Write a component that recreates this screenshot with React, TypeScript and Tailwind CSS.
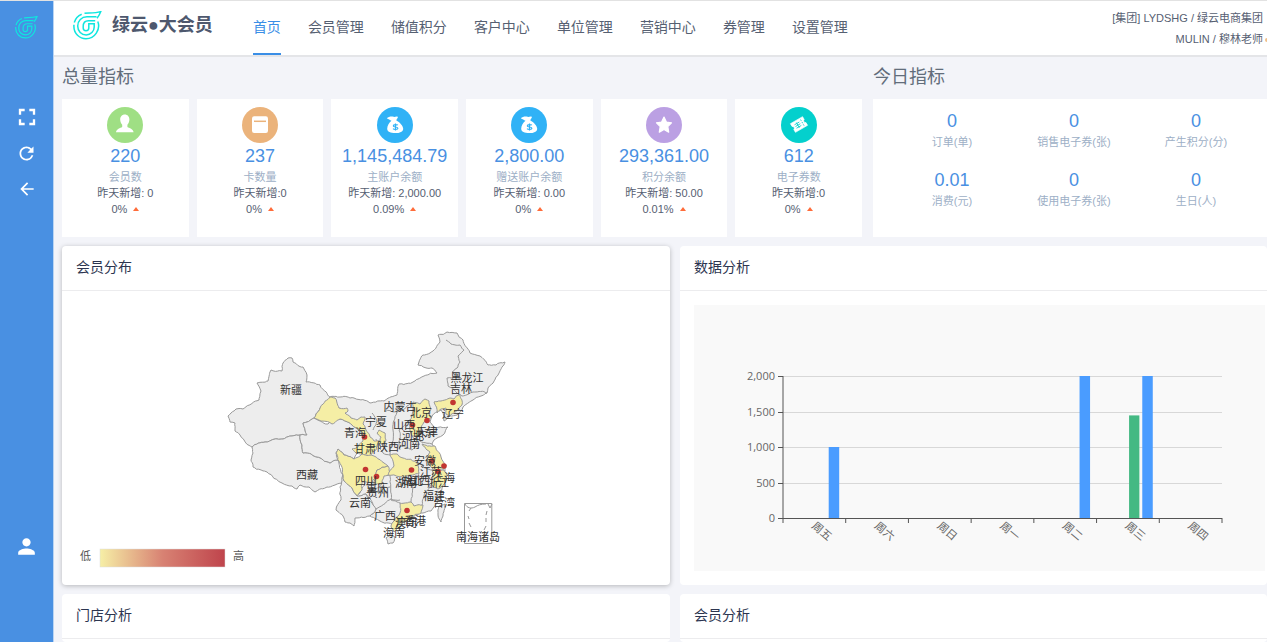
import type { ReactNode } from "react";
import {
  MdArrowBack,
  MdFullscreen,
  MdPerson,
  MdRefresh,
} from "react-icons/md";

type Point = [number, number];

const navItems = [
  "首页",
  "会员管理",
  "储值积分",
  "客户中心",
  "单位管理",
  "营销中心",
  "券管理",
  "设置管理",
];

const MemberIcon = () => (
  <svg viewBox="0 0 36 36" className="size-9">
    <circle cx="18" cy="18" r="18" fill="#9fdf84" />
    <path
      d="M17.8 7.6c2.8 0 4.6 2.2 4.6 5 0 2.200-.9 4.100-2 5.200v2.200c1.800 1.200 6 2 6.200 5.300H9c.2-3.300 4.400-4.100 6.200-5.300v-2.200c-1.100-1.100-2-3-2-5.200 0-2.800 1.800-5 4.600-5z"
      fill="#fff"
    />
  </svg>
);

const CardIcon = () => (
  <svg viewBox="0 0 36 36" className="size-9">
    <circle cx="18" cy="18" r="18" fill="#ebb37b" />
    <rect x="10" y="9.300" width="16" height="16.700" rx="2.200" fill="#fff" />
    <path d="M12 14.300h12" stroke="#ebb37b" strokeWidth="1.500" />
  </svg>
);

const MoneyIcon = () => (
  <svg viewBox="0 0 36 36" className="size-9">
    <circle cx="18" cy="18" r="18" fill="#30b2f6" />
    <path
      d="M9.800 11.300c1.700-1.500 4.400-2.200 6.700-1.500 1.400.4 2.800-.9 4.200-.1.800.6-1.400 2.600-1.300 3.700 3.200 1.500 6.800 5.500 6.800 8.300 0 3-3.400 4.400-8 4.400s-8-1.500-8-4.400c0-2.900 2-6.200 4.300-7.900-1.500-.9-3-1.400-4.700-2.500z"
      fill="#fff"
    />
    <path
      d="M20.800 18.200c-.7-.8-4.500-1-4.500.7 0 1.500 4.600.7 4.600 2.300 0 1.700-4 1.500-4.900.5M18.500 16.500v7"
      fill="none"
      stroke="#30b2f6"
      strokeWidth="1.200"
    />
  </svg>
);

const StarIcon = () => (
  <svg viewBox="0 0 36 36" className="size-9">
    <circle cx="18" cy="18" r="18" fill="#bba0e3" />
    <path
      d="M18 10l2.400 5.100 5.100.7-3.700 3.800.9 5.600-4.700-2.700-4.700 2.700.9-5.600-3.700-3.800 5.100-.7z"
      fill="#fff"
      stroke="#fff"
      strokeWidth="1.200"
      strokeLinejoin="round"
    />
  </svg>
);

const TicketIcon = () => (
  <svg viewBox="0 0 36 36" className="size-9">
    <circle cx="18" cy="18" r="18" fill="#04d0cd" />
    <g transform="rotate(-30 18 17.500)">
      <path
        d="M11 12.500h14v3.200a1.900 1.900 0 0 0 0 3.600v3.200H11v-3.200a1.900 1.900 0 0 0 0-3.600z"
        fill="#fff"
        stroke="#fff"
        strokeWidth=".6"
      />
      <path
        d="M14 15.500h5.500M14 17.500h5.500M14 19.500h5.500M16.700 14.500v6M21.800 14v1.500M21.800 16.700v1.600M21.800 19.500V21"
        stroke="#04d0cd"
        strokeWidth=".8"
      />
    </g>
  </svg>
);

const totals: {
  icon: ReactNode;
  value: string;
  label: string;
  added: string;
  rate: string;
}[] = [
  { icon: <MemberIcon />, value: "220", label: "会员数", added: "昨天新增: 0", rate: "0%" },
  { icon: <CardIcon />, value: "237", label: "卡数量", added: "昨天新增:0", rate: "0%" },
  { icon: <MoneyIcon />, value: "1,145,484.79", label: "主账户余额", added: "昨天新增: 2,000.00", rate: "0.09%" },
  { icon: <MoneyIcon />, value: "2,800.00", label: "赠送账户余额", added: "昨天新增: 0.00", rate: "0%" },
  { icon: <StarIcon />, value: "293,361.00", label: "积分余额", added: "昨天新增: 50.00", rate: "0.01%" },
  { icon: <TicketIcon />, value: "612", label: "电子券数", added: "昨天新增:0", rate: "0%" },
];

const today = [
  { value: "0", label: "订单(单)" },
  { value: "0", label: "销售电子券(张)" },
  { value: "0", label: "产生积分(分)" },
  { value: "0.01", label: "消费(元)" },
  { value: "0", label: "使用电子券(张)" },
  { value: "0", label: "生日(人)" },
];

const Logo = ({ className }: { className: string }) => (
  <svg
    viewBox="0 0 29 29"
    className={className}
    fill="none"
    stroke="#0fe6df"
    strokeWidth="1.500"
  >
    <path d="M11.500 2.300c5-.4 11 .1 16.300-1.700-1 2.700-2.400 5-3.800 6.700M24.800 10.500c3 8-3 17.200-11.800 17.200C6.500 27.700.9 22.500.9 15.500v-1.700M1.300 11.500c1-3.800 3.700-6.800 7.400-8.300" />
    <path d="M23.500 5.800H14C8.500 5.800 4.700 9.800 4.700 15s3.800 8.900 8.500 8.900c4.500 0 8-3.500 8-8v-3.200h-5.400V17c0 3.600-5.600 3.600-5.600 0v-1.500c0-3.500 2-5.700 5.300-5.700h6.700" />
  </svg>
);

// Splits an edge so that borders look surveyed rather than ruled. The offset
// depends only on the midpoint, so neighbours that share an edge stay closed.
const split = (a: Point, b: Point, depth: number): Point[] => {
  const dx = b[0] - a[0];
  const dy = b[1] - a[1];
  const length = Math.hypot(dx, dy);
  if (depth === 0 || length < 3) return [b];
  const mx = (a[0] + b[0]) / 2;
  const my = (a[1] + b[1]) / 2;
  const noise = Math.sin(mx * 12.9898 + my * 78.233);
  const other = Math.cos(mx * 39.346 + my * 11.135);
  const m: Point = [mx + noise * length * 0.09, my + other * length * 0.09];
  return [...split(a, m, depth - 1), ...split(m, b, depth - 1)];
};

const outline = (text: string, closed = true) => {
  const points = text
    .split(" ")
    .map((pair) => pair.split(",").map(Number) as Point);
  const all: Point[] = [points[0]];
  const end = closed ? points.length : points.length - 1;
  for (let i = 0; i < end; i++) {
    all.push(...split(points[i], points[(i + 1) % points.length], 3));
  }
  return (
    "M" +
    all.map(([x, y]) => `${x.toFixed(1)} ${y.toFixed(1)}`).join("L") +
    (closed ? "Z" : "")
  );
};

const greyRegions = [
  // north, east and south
  "330,397 340,397 354,398 370,403 384,401 397,395 399,384 413,382 424,376 437,373 432,368 418,365 423,355 430,353 440,342 438,335 447,332 457,333 463,340 470,353 480,356 488,365 496,365 505,362 498,375 488,388 487,393 481,396 473,400 463,407 457,415 450,416 444,421 441,410 432,416 430,422 435,428 448,427 443,435 434,440 432,444 440,457 446,465 445,473 445,482 441,493 437,503 431,511 423,513 410,519 402,523 394,532 392,524 380,521 370,516 376,509 366,494 357,496 362,488 368,478 380,478 372,458 366,443 352,424 339,408",
  // Xinjiang
  "330,397 320,385 306,382 307,375 303,367 293,362 292,358 288,358 283,363 282,371 271,370 268,381 257,383 261,391 259,400 243,409 236,409 228,416 230,422 235,423 235,431 240,435 244,440 252,447 265,442 283,439 292,436 300,435 307,435 305,430 303,423 314,418 320,408 330,400",
  // Tibet
  "252,447 253,453 251,460 253,467 267,472 282,483 292,486 297,489 300,485 309,487 315,492 327,487 335,485 342,483 343,475 338,460 330,463 317,457 303,453 302,445 300,435 292,436 283,439 265,442",
  // Qinghai
  "300,435 307,435 305,430 303,423 314,418 328,424 340,419 352,425 361,431 366,443 358,452 354,459 344,455 338,449 336,453 338,460 330,463 317,457 303,453 302,445",
  // Yunnan
  "343,475 344,481 352,488 357,496 366,494 372,503 376,509 370,516 355,518 354,526 350,523 345,522 343,516 336,510 341,500 340,487",
  // Hainan
  "386,538 391,535 395,537 393,543 388,544",
  // Taiwan
  "439,506 445,504 443,516 441,522 438,515",
];

const yellowRegions = [
  // Gansu
  "330,397 335,398 339,408 347,408 348,411 345,413 351,418 357,420 361,417 365,417 363,424 366,430 370,437 374,441 380,441 381,437 377,433 379,430 385,433 386,440 384,444 378,443 376,450 370,456 362,454 356,453 352,449 358,447 363,441 361,431 352,425 340,419 332,424 314,418 320,408",
  // Sichuan
  "338,449 344,455 354,459 362,454 374,456 384,463 388,466 377,470 372,483 362,482 362,490 357,496 352,488 344,481 343,475 341,465 336,453",
  // Chongqing
  "377,470 388,466 391,475 384,476 381,485 374,484",
  // Hubei
  "390,455 397,454 403,458 417,463 419,473 407,476 388,475 394,466",
  // Hebei
  "413,402 420,404 425,399 429,401 431,409 428,413 432,417 424,422 420,435 412,436 410,420",
  // Liaoning
  "434,402 441,401 450,398 454,399 460,394 462,405 450,416 446,414 446,408 441,409 437,413",
  // Jiangsu
  "422,444 435,446 441,457 446,465 444,469 433,469 427,460 430,452",
  // Zhejiang
  "432,470 444,470 447,475 445,483 438,489 431,484",
  // Guangdong
  "400,503 411,502 414,506 423,505 421,513 410,518 402,523 398,528 394,532 391,527 394,521 400,513",
];

const innerBorders = [
  "446,340 451,344 460,345 464,350 458,356 460,362 452,372 462,379 447,378 448,386 462,396 473,392 487,393",
  "397,412 393,430 390,455",
  "384,411 397,412 410,404",
  "410,420 399,430 400,450",
  "412,436 420,441 432,444",
  "400,446 412,450 420,444",
  "417,463 428,469 433,470",
  "419,473 412,485 411,502",
  "390,476 391,500 400,503",
  "368,490 380,486 390,487",
  "376,509 391,499 400,500",
  "432,484 425,492 422,505",
  "376,439 383,453 390,455",
  "372,413 377,421 373,430",
];

const provinces: [string, number, number][] = [
  ["新疆", 291, 394],
  ["西藏", 307, 479],
  ["黑龙江", 467, 382],
  ["吉林", 461, 393],
  ["辽宁", 453, 418],
  ["内蒙古", 400, 411],
  ["北京", 421, 417],
  ["天津", 427, 436],
  ["河北", 413, 440],
  ["山东", 424, 437],
  ["山西", 404, 429],
  ["宁夏", 376, 426],
  ["青海", 355, 437],
  ["甘肃", 365, 453],
  ["陕西", 388, 451],
  ["河南", 409, 448],
  ["安徽", 425, 465],
  ["江苏", 431, 476],
  ["上海", 444, 482],
  ["浙江", 438, 487],
  ["四川", 366, 485],
  ["重庆", 377, 492],
  ["贵州", 378, 497],
  ["湖北", 412, 485],
  ["湖南", 406, 487],
  ["江西", 419, 485],
  ["福建", 434, 500],
  ["台湾", 444, 507],
  ["云南", 360, 507],
  ["广西", 385, 520],
  ["广东", 407, 526],
  ["香港", 415, 525],
  ["澳门", 406, 527],
  ["海南", 394, 537],
  ["南海诸岛", 478, 541],
];

const stores: Point[] = [
  [453, 402.5],
  [427, 420.5],
  [412.5, 425],
  [364.5, 437],
  [365.5, 469.5],
  [376.5, 476.5],
  [411.5, 470],
  [432, 461],
  [444, 466],
  [438, 471.5],
  [407, 510.5],
];

const ChinaMap = () => (
  <svg viewBox="62 291 608 294" className="block w-full">
    <defs>
      <linearGradient id="heat">
        <stop offset="0" stopColor="#f6efa6" />
        <stop offset="0.5" stopColor="#d88273" />
        <stop offset="1" stopColor="#bf444c" />
      </linearGradient>
    </defs>
    <g stroke="#999" strokeWidth="1" strokeLinejoin="round">
      {greyRegions.map((region) => (
        <path key={region} d={outline(region)} fill="#ededed" />
      ))}
      {innerBorders.map((border) => (
        <path key={border} d={outline(border, false)} fill="none" />
      ))}
      {yellowRegions.map((region) => (
        <path key={region} d={outline(region)} fill="#f5eea5" />
      ))}
      <path d="M464.500 503.500h27.300v40h-27.300z" fill="none" />
      <path
        d="M465 504c2 4 6 5 10 3 3-2 6-3 11-3M488 504l2 4 2-4M471 508l-2 3M468 516l1 3M469 523l2 4M487 511l-1 4M486 518v4M486 526l-2 4M470 534l3-3M481 531l3 4"
        fill="none"
      />
    </g>
    <g className="fill-[#c23531]">
      {stores.map(([x, y]) => (
        <circle key={`${x}-${y}`} cx={x} cy={y} r="2.800" />
      ))}
    </g>
    <g className="fill-[#333] text-[11px]" textAnchor="middle">
      {provinces.map(([name, x, y]) => (
        <text key={name} x={x} y={y}>
          {name}
        </text>
      ))}
    </g>
    <rect x="100" y="549" width="125" height="18" fill="url(#heat)" stroke="#ddd" strokeWidth="0.500" />
    <g className="fill-[#555] text-[11px]">
      <text x="80" y="560">
        低
      </text>
      <text x="233" y="560">
        高
      </text>
    </g>
  </svg>
);

const week = [
  { day: "周五", green: 0, blue: 1000 },
  { day: "周六", green: 0, blue: 0 },
  { day: "周日", green: 0, blue: 0 },
  { day: "周一", green: 0, blue: 0 },
  { day: "周二", green: 0, blue: 2000 },
  { day: "周三", green: 1445, blue: 2000 },
  { day: "周四", green: 0, blue: 0 },
];

const scale = [2000, 1500, 1000, 500, 0];
const plot = { left: 89, right: 528, bottom: 213, height: 142 };
const band = (plot.right - plot.left) / week.length;

const toHeight = (value: number) => (value / 2000) * plot.height;

const WeekChart = () => (
  <svg viewBox="0 0 571 266" className="block w-full bg-[#f9f9f9]">
    {scale.map((value) => {
      const y = Math.round(plot.bottom - toHeight(value)) + 0.5;
      return (
        <g key={value}>
          {value > 0 && (
            <line x1={plot.left} x2={plot.right} y1={y} y2={y} stroke="#d8d8d8" />
          )}
          <line x1={plot.left - 5} x2={plot.left} y1={y} y2={y} stroke="#555" />
          <text
            x={plot.left - 8}
            y={y + 3}
            textAnchor="end"
            className="fill-[#666] font-['Open_Sans','Noto_Sans',sans-serif] text-[11px]"
          >
            {value.toLocaleString("en-US")}
          </text>
        </g>
      );
    })}
    {week.map(({ day, green, blue }, i) => {
      const x = plot.left + band * i;
      return (
        <g key={day}>
          <rect x={x + 32.5} y={plot.bottom - toHeight(green)} width="10.300" height={toHeight(green)} fill="#44b983" />
          <rect x={x + 45.7} y={plot.bottom - toHeight(blue)} width="10.500" height={toHeight(blue)} fill="#4a9cff" />
          <text
            transform={`translate(${x + 28} ${plot.bottom + 9}) rotate(40)`}
            className="fill-[#666] text-[11px]"
          >
            {day}
          </text>
          <line x1={x + band} x2={x + band} y1={plot.bottom} y2={plot.bottom + 5} stroke="#555" />
        </g>
      );
    })}
    <path
      d={`M${plot.left} ${plot.bottom - plot.height}V${plot.bottom + 5}M${plot.left} ${plot.bottom + 0.5}H${plot.right}`}
      fill="none"
      stroke="#555"
    />
  </svg>
);

const Panel = ({
  title,
  raised = false,
  children,
}: {
  title: string;
  raised?: boolean;
  children?: ReactNode;
}) => (
  <section
    className={`rounded bg-white ${raised ? "shadow-[0_1px_5px_rgba(0,0,0,0.25)]" : ""}`}
  >
    <h3 className="flex h-[45px] items-center border-b border-[#ececee] px-3.5 pb-0.5 text-sm text-[#2c3550]">
      {title}
    </h3>
    {children}
  </section>
);

const Sidebar = () => (
  <aside className="flex w-[54px] shrink-0 flex-col items-center border-r border-[#b9d4f3] bg-[#4990e2] text-white">
    <Logo className="mt-[15px] size-[23px]" />
    <div className="mt-16 flex flex-col items-center gap-2">
      <button type="button" aria-label="全屏" className="flex size-7 items-center justify-center">
        <MdFullscreen size={28} />
      </button>
      <button type="button" aria-label="刷新" className="flex size-7 items-center justify-center">
        <MdRefresh size={21} />
      </button>
      <button type="button" aria-label="返回" className="flex size-7 items-center justify-center">
        <MdArrowBack size={20} />
      </button>
    </div>
    <button type="button" aria-label="用户" className="mt-auto mb-[83px]">
      <MdPerson size={25} />
    </button>
  </aside>
);

const Header = () => (
  <header className="flex h-14 items-stretch border-b-2 border-[#e4e5e8] bg-white pl-[19px]">
    <div className="flex items-center gap-2.5 pb-1.5">
      <Logo className="size-[29px]" />
      <h1 className="text-lg font-bold text-[#4e586e]">绿云●大会员</h1>
    </div>
    <nav className="ml-10 flex gap-[27px] text-sm text-[#566072]">
      {navItems.map((item, i) => (
        <a
          key={item}
          href="#"
          className={`flex items-center whitespace-nowrap border-b-2 ${
            i === 0 ? "border-[#3a8ee6] text-[#3a8ee6]" : "border-transparent"
          }`}
        >
          {item}
        </a>
      ))}
    </nav>
    <div className="ml-auto flex flex-col items-end pt-[7px] text-[11px] leading-[21px] whitespace-nowrap text-[#566072]">
      <span className="pr-1">[集团] LYDSHG / 绿云电商集团</span>
      <span className="flex items-center gap-0.5">
        MULIN / 穆林老师
        <span className="h-1 w-0.5 rounded-l-full bg-[#f0c08a]" />
      </span>
    </div>
  </header>
);

export default function App() {
  return (
    <div className="flex min-h-screen flex-col border-t border-[#e2e2e2] bg-white pb-0.5 font-['Liberation_Sans','Noto_Sans_CJK_SC',sans-serif]">
      <div className="flex flex-1">
        <Sidebar />
        <div className="flex min-w-0 flex-1 flex-col bg-[#f3f4f9]">
          <Header />
          <main className="flex flex-1 flex-col gap-[9px] pl-2">
            <div className="grid grid-cols-[800fr_394fr] gap-x-[11px]">
              <section>
                <h2 className="h-[42px] pt-1.5 text-lg text-[#626d7b]">总量指标</h2>
                <div className="grid grid-cols-6 gap-2">
                  {totals.map((item) => (
                    <div
                      key={item.label}
                      className="flex h-[138px] flex-col items-center bg-white pt-2 text-[11px] leading-4 whitespace-nowrap text-[#566072]"
                    >
                      {item.icon}
                      <p className="text-lg leading-[26px] text-[#4990e2]">{item.value}</p>
                      <p className="text-[#9dafc6]">{item.label}</p>
                      <p>{item.added}</p>
                      <p className="flex items-center gap-1.5">
                        {item.rate}
                        <svg viewBox="0 0 6 4" className="h-1 w-1.5">
                          <path d="M3 0l3 4H0z" fill="#ff6c3a" />
                        </svg>
                      </p>
                    </div>
                  ))}
                </div>
              </section>
              <section>
                <h2 className="h-[42px] pt-1.5 text-lg text-[#626d7b]">今日指标</h2>
                <div className="grid h-[138px] grid-cols-3 content-start gap-y-[17px] bg-white pt-2.5 pr-2.5 pl-[18px] text-center">
                  {today.map((item) => (
                    <div key={item.label}>
                      <p className="text-lg leading-6 text-[#4990e2]">{item.value}</p>
                      <p className="text-[11px] leading-[18px] text-[#9dafc6]">{item.label}</p>
                    </div>
                  ))}
                </div>
              </section>
            </div>
            <div className="grid grid-cols-[608fr_587fr] gap-x-2.5">
              <Panel title="会员分布" raised>
                <ChinaMap />
              </Panel>
              <Panel title="数据分析">
                <div className="py-3.5 pr-0.5 pl-3.5">
                  <WeekChart />
                </div>
              </Panel>
            </div>
            <div className="grid flex-1 grid-cols-[608fr_587fr] gap-x-2.5">
              <Panel title="门店分析" />
              <Panel title="会员分析" />
            </div>
          </main>
        </div>
      </div>
    </div>
  );
}
